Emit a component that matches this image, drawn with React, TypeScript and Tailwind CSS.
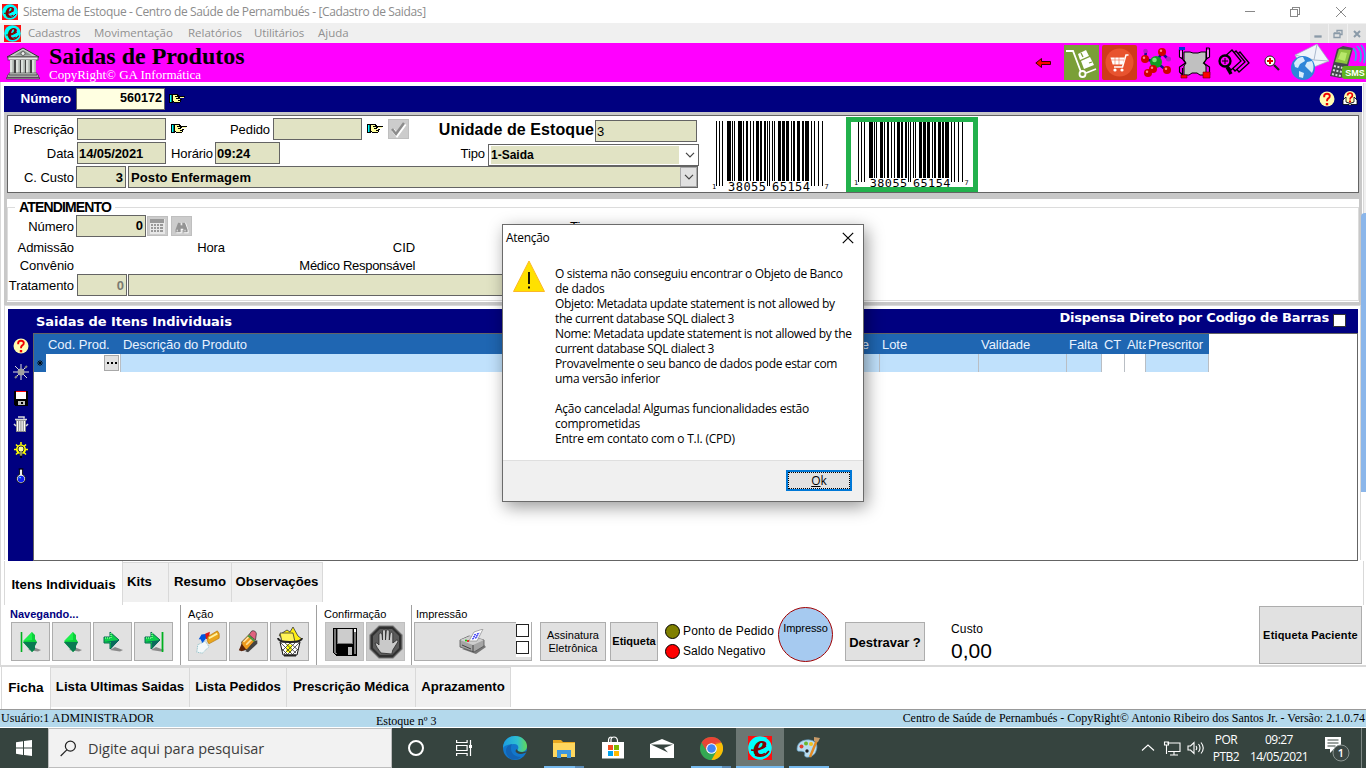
import React from "react";

const sans = "font-['Liberation_Sans',Arial,sans-serif]";
const ui = "font-['Open_Sans','Noto_Sans',sans-serif]";
const serif = "font-['Liberation_Serif','Times_New_Roman',serif]";
const verdana = "font-['DejaVu_Sans',Verdana,sans-serif]";

type P = { className?: string };

function LogoE({ className = "" }: P) {
  return (
    <svg viewBox="0 0 24 24" className={`shrink-0 overflow-visible ${className}`}>
      <rect width="24" height="24" fill="#ff1010" />
      <circle cx="12" cy="12" r="11.8" fill="#0ff" />
      <text x="12" y="19.500" textAnchor="middle" fontFamily="Liberation Serif, serif" fontWeight="bold" fontStyle="italic" fontSize="32" fill="#800000">e</text>
      <path d="M3 14q9 1 15-4M7 19q8 4 14-4" fill="none" stroke="#800000" strokeWidth="1.500" />
    </svg>
  );
}

function Bank() {
  return (
    <svg viewBox="0 0 34 34" className="h-[34px] w-[34px]">
      <path d="M1 11 17 2l16 9z" fill="#c8cdc8" stroke="#333" />
      <path d="M8 9.5 17 4l9 5.500z" fill="#8c9690" />
      <circle cx="17" cy="7.500" r="2" fill="#eee" stroke="#444" strokeWidth=".7" />
      <rect x="2" y="11" width="30" height="3" fill="#e8ebe8" stroke="#444" strokeWidth=".8" />
      <rect x="4" y="14" width="26" height="13" fill="#444" />
      {[4, 10, 15, 20, 26].map((x) => (
        <g key={x}>
          <rect x={x} y="14" width="4" height="13" fill="#dde2dd" />
          <rect x={x + 2.6} y="14" width="1" height="13" fill="#8d958f" />
        </g>
      ))}
      <path d="M3 27h28v2H3zM1.500 29h31v2h-31z" fill="#d8dcd8" stroke="#444" strokeWidth=".7" />
      <path d="M.5 31.500h33V33H.5z" fill="#99a09a" stroke="#333" strokeWidth=".6" />
    </svg>
  );
}

function Hand({ className = "" }: P) {
  return (
    <svg viewBox="0 0 16 10" className={`h-[10px] w-[16px] shrink-0 ${className}`} shapeRendering="crispEdges">
      <path d="M0 0h4v9H0z" fill="#000" />
      <path d="M1 1h1v7H1z" fill="#0ff" />
      <path d="M2 1h1v7H2z" fill="#008080" />
      <path d="M4 0h5v1h1v1h6v1h-5v1H9V3H7v1h3v1h3v1h-1v2h-1v1H5V8H4z" fill="#000" />
      <path d="M4 1h4v1H6v1h3v1h2v-1h4v1H7v1h4v1H9v1h2v1H5V7H4z" fill="#ffff9c" />
    </svg>
  );
}

function Help({ className = "" }: P) {
  return (
    <svg viewBox="0 0 16 16" className={`h-4 w-4 shrink-0 ${className}`}>
      <circle cx="8" cy="8" r="7.500" fill="#fffbb0" />
      <path d="M5.200 6.200V4.700Q5.600 2.700 8 2.700t2.800 2.100Q11 6.300 9 7.600q-1 .7-1 2.600" fill="none" stroke="#f00000" strokeWidth="1.900" />
      <rect x="6.800" y="12" width="2.400" height="2.300" fill="#f00000" />
    </svg>
  );
}

function HelpBook() {
  return (
    <svg viewBox="0 0 16 16" className="h-4 w-4 shrink-0">
      <circle cx="8" cy="6" r="6" fill="#fffbb0" />
      <path d="M1 13.500V9l3-3v5l4 1.500L12 11V6l3 3v4.500H9l-1 1-1-1z" fill="#fff" stroke="#000" strokeWidth=".8" />
      <path d="M5.500 4.500Q5.700 2 8 2t2.400 2.200Q10.500 5.500 9 6.400q-1 .7-1 2" fill="none" stroke="#f00000" strokeWidth="1.700" />
      <rect x="7" y="9.500" width="2" height="2" fill="#f00000" />
    </svg>
  );
}

function ToolIcons() {
  return (
    <div className="flex items-center">
      <svg viewBox="0 0 17 12" className="mr-[12px] h-[12px] w-[17px]">
        <path d="M.8 6 6.500 1.500V4.500H15.500v3h-9v3z" fill="#f00" stroke="#400" />
      </svg>
      <svg viewBox="0 0 35 35" className="mr-[3px] h-[35px] w-[35px]">
        <rect width="35" height="35" fill="#7a9f38" />
        <path d="M2 6h7l8 21" fill="none" stroke="#fff" strokeWidth="1.800" />
        <circle cx="18.500" cy="29" r="3" fill="none" stroke="#fff" strokeWidth="1.800" />
        <path d="m22 28 10-4" stroke="#fff" strokeWidth="1.800" />
        <path d="m14 9 8-4 3 6-9 4zM17 16l9-4 4 8-10 4z" fill="#fff" />
        <path d="m17 8 2 4M25 18l3-1" stroke="#7a9f38" strokeWidth="1.300" />
      </svg>
      <svg viewBox="0 0 35 35" className="mr-[4px] h-[35px] w-[35px]">
        <rect width="35" height="35" rx="2" fill="#cf3b1a" />
        <circle cx="17.500" cy="17.500" r="14" fill="#e8532f" />
        <path d="M26.500 10H24l-3.500 12H12" fill="none" stroke="#fff" strokeWidth="1.500" />
        <path d="M8.500 12.500h14l-1.800 7h-10z" fill="#fff" />
        <path d="M8.500 15h14M13 12v8M17 12v8" stroke="#e8532f" strokeWidth=".5" />
        <circle cx="13" cy="25" r="1.600" fill="#fff" /><circle cx="20" cy="25" r="1.600" fill="#fff" />
      </svg>
      <svg viewBox="0 0 30 30" className="mr-[7px] h-[30px] w-[30px]">
        <path d="m15 14 6-9M15 14 4 11 5 3M15 14l10 8M15 14 7 26M21 5l6 6" stroke="#10108a" strokeWidth="2.500" fill="none" />
        <circle cx="15" cy="14" r="6" fill="#129a22" /><circle cx="13.500" cy="12" r="2.300" fill="#7be57b" />
        {[[4, 11], [21, 4], [26, 22], [12, 21], [7, 25]].map(([x, y]) => (
          <g key={`${x}-${y}`}><circle cx={x} cy={y} r="4" fill="#d00000" /><circle cx={x - 1} cy={y - 1.2} r="1.200" fill="#ff8a8a" /></g>
        ))}
        <circle cx="4.500" cy="3" r="2.300" fill="#b020c0" /><circle cx="27.500" cy="11" r="2.500" fill="#b020c0" />
      </svg>
      <svg viewBox="0 0 33 32" className="mr-[7px] h-[32px] w-[33px]">
        <path d="M6 5h6l3 1h5l3-1h5v8l-2 3 2 3v9h-6l-3-2h-5l-3 2H6v-9l2-3-2-3z" fill="#c0c0c0" stroke="#000" />
        <path d="M1.500 2v8l3 2V3M4.500 12l3 4-6 4v5l3 3v-7M31.500 1v9l-3 2V1h3M28.500 12l-3 4 6 4v8" fill="none" stroke="#000" strokeWidth="1.200" />
        <path d="M3 4v6M30 3v7" stroke="#fff" />
        <path d="M1 0h6v3H1z" fill="#0033dd" /><path d="M3 28h6v3H3zM25 25h7v6h-7z" fill="#f00" stroke="#600" strokeWidth=".6" />
      </svg>
      <svg viewBox="0 0 33 30" className="mr-[13px] h-[30px] w-[33px]" fill="#ff00ff" stroke="#000" strokeWidth="1.300">
        <path d="m22 4 9 11-10 9-9-11z" />
        <path d="m18 3 9 11-10 9-9-11z" />
        <path d="m14 2 9 11-10 9-9-11z" />
        <circle cx="7" cy="13" r="5.500" strokeWidth="2.300" />
        <path d="m9 19 4 7" strokeWidth="3.500" />
        <path d="M4 13h6M7 10v6" strokeWidth="1" />
      </svg>
      <svg viewBox="0 0 16 16" className="mr-[10px] h-[16px] w-[16px]">
        <circle cx="6" cy="6" r="5" fill="#fff" stroke="#222" />
        <path d="M6 3v6M3 6h6" stroke="#e00000" strokeWidth="2" />
        <path d="m10 10 5 5" stroke="#222" strokeWidth="2.200" />
      </svg>
      <svg viewBox="0 0 39 37" className="h-[37px] w-[39px]">
        <path d="m5 11 22-11 12 17-25 10z" fill="#f0f4fa" stroke="#9aa9bd" strokeWidth=".7" />
        <path d="m5 11 19 5 3-16M24 16l15 1" fill="none" stroke="#aab8cc" />
        <circle cx="13" cy="24" r="12" fill="#2f86d8" />
        <path d="M4 19q4-7 9-6l2 4-5 3-2 4-3-1zM17 18l5-1q3 6 0 12l-4-4-3-3zM9 27l5 2-1 5-4-1z" fill="#d6ecfb" />
      </svg>
      <svg viewBox="0 0 37 37" className="h-[37px] w-[37px]">
        <path d="m8 5 6-3 10 2-8 29-5 1-10-2z" fill="#45494d" />
        <path d="m10 5 12 1-4 14-12-2z" fill="#8cc63f" /><path d="m12 8 6 1-2 8-7-2z" fill="#b8e86b" />
        <path d="m5 22 9 2M4 26l9 2M3 30l9 2" stroke="#d5d8da" strokeWidth="2" strokeDasharray="2 1.500" />
        <path d="M24 4q5 5 2 13M28 2q6 6 3 16M32 1q6 7 3 18" fill="none" stroke="#25b5e8" strokeWidth="1.600" />
        <rect x="13" y="22" width="26" height="13" rx="3" fill="#5fb320" />
        <text x="26" y="32" textAnchor="middle" fontFamily="Liberation Sans" fontWeight="bold" fontSize="9" fill="#fff">SMS</text>
      </svg>
    </div>
  );
}

const bars: [number, number][] = [
  [4, 1], [7, 1], [10, 1], [15, 4], [20, 1], [22, 1], [26, 4], [31, 1], [34, 2], [38, 1], [41, 1], [44, 3], [48, 2], [52, 2],
  [55, 1], [57, 1], [60, 1], [62, 1], [66, 3], [70, 3], [74, 3], [79, 1], [81, 2], [85, 3], [90, 2], [93, 4], [99, 1], [102, 1], [106, 1], [110, 1],
];

function Barcode({ className = "" }: P) {
  return (
    <svg viewBox="0 0 118 70" preserveAspectRatio="none" className={`shrink-0 overflow-visible ${className}`} shapeRendering="crispEdges">
      {bars.map(([x, w]) => (
        <rect key={x} x={x} y="0" width={w} height={x < 12 || x > 98 || (x > 54 && x < 58) ? 65 : 60} fill="#000" />
      ))}
      <g fontFamily="DejaVu Sans Mono, monospace" fontSize="12" fill="#000">
        <text x="16" y="69.500" textLength="38">38055</text>
        <text x="60" y="69.500" textLength="38">65154</text>
        <text x="0" y="68" fontSize="7">1</text>
        <text x="112.500" y="68" fontSize="7">7</text>
      </g>
    </svg>
  );
}

const field = "flex items-center shrink-0 h-[22px] border border-[#646464] bg-[#e1e3c4] font-bold text-[13px] leading-none";

function Lab({ className = "", children }: P & { children: React.ReactNode }) {
  return <span className={`shrink-0 pt-[1px] text-right text-[13px] tracking-[-0.080px] ${className}`}>{children}</span>;
}

function Chevron() {
  return <svg viewBox="0 0 10 6" className="h-[6px] w-[10px]"><path d="m1 .8 4 4 4-4" fill="none" stroke="#444" strokeWidth="1.200" /></svg>;
}

function MiniButton({ children, className = "" }: P & { children: React.ReactNode }) {
  return <div className={`flex h-[20px] w-[21px] shrink-0 items-center justify-center border border-[#bfbfbf] bg-[#ccc] ${className}`}>{children}</div>;
}

function Titles() {
  return (
    <>
      <div className={`flex h-[23px] items-center bg-white pl-[2px] text-[12px] text-[#8c8c8c] ${ui}`}>
        <LogoE className="h-4 w-4" />
        <span className="ml-[5px] tracking-[-0.360px]">Sistema de Estoque - Centro de Saúde de Pernambués - [Cadastro de Saidas]</span>
        <svg viewBox="0 0 110 12" className="mr-[18px] ml-auto h-[12px] w-[110px]" fill="none" stroke="#888" shapeRendering="crispEdges">
          <path d="M7 5.500h10M52.500 3.500h7v7h-7zM54.500 3V1.500h7v7h-2" />
          <path d="m98 1 10 10M108 1 98 11" shapeRendering="auto" />
        </svg>
      </div>
      <div className={`flex h-[20px] items-center bg-[#f0f0f0] pb-[1px] pl-[4px] text-[11.500px] text-[#909090] ${ui}`}>
        <LogoE className="mt-[1px] h-[17px] w-[17px]" />
        <span className="ml-[7px] w-[66px] tracking-[-0.150px]">Cadastros</span>
        <span className="w-[94px] tracking-[-0.050px]">Movimentação</span>
        <span className="w-[66px]">Relatórios</span>
        <span className="w-[64px] tracking-[-0.150px]">Utilitários</span>
        <span>Ajuda</span>
        <div className="mt-[1px] ml-auto flex gap-[1px]">
          {["M5 13h6v-1H5z", "M5 9.500h6v4H5zM5 9h6M8 8V6.500h5v4h-2", "m6 7 6 6m0-6-6 6"].map((d, i) => (
            <svg key={i} viewBox="0 0 18 19" className="h-[19px] w-[18px] bg-[#e3e3e3]" fill="none" stroke="#8a9aa8" strokeWidth={i === 2 ? 2 : 1.3}><path d={d} /></svg>
          ))}
        </div>
      </div>
      <div className="flex h-[39px] items-center bg-[#ff00ff] pl-[6px]">
        <Bank />
        <div className={`ml-[9px] flex flex-col ${serif}`}>
          <span className="text-[24px] leading-[25px] font-bold">Saidas de Produtos</span>
          <span className="-mt-[1px] text-[13px] leading-[13px] text-white">CopyRight© GA Informática</span>
        </div>
        <div className="ml-auto"><ToolIcons /></div>
      </div>
    </>
  );
}

function Header() {
  return (
    <>
      <div className="mt-[3px] flex h-[26px] items-center bg-[#000080] text-[13px] font-bold text-white">
        <span className="w-[67px] text-right text-[13.500px] tracking-[-0.100px]">Número</span>
        <div className="mr-[4px] ml-[5px] flex h-[22px] w-[89px] items-center justify-end border border-[#646464] bg-[#ffffe1] pr-[2px] pb-[2px] text-[12.600px] text-black">560172</div>
        <Hand />
        <Help className="mr-[7px] ml-auto" />
        <HelpBook />
        <span className="w-[4px]" />
      </div>
      <div className="mt-[3px] mr-[3px] ml-[3px] flex h-[78px] border border-[#646464] bg-white">
        <div className="flex w-[692px] shrink-0 pt-[2px]">
          <div className="flex flex-col gap-[2px]">
            <div className="flex h-[22px] items-center">
              <Lab className="w-[66px]">Prescrição</Lab>
              <div className={`${field} ml-[3px] w-[89px]`} />
              <Hand className="ml-[5px]" />
              <Lab className="w-[83px]">Pedido</Lab>
              <div className={`${field} ml-[3px] w-[89px]`} />
              <Hand className="ml-[5px]" />
              <MiniButton className="ml-[5px]">
                <svg viewBox="0 0 18 17" className="h-[17px] w-[18px]" fill="none"><path d="m3 9 4 5L15 3" stroke="#fff" strokeWidth="3.500" /><path d="m2 8 4 5L14 2" stroke="#8c8c8c" strokeWidth="2.500" /></svg>
              </MiniButton>
              <span className="w-[185px] pt-[1px] text-right text-[16px] font-bold tracking-[0.080px]">Unidade de Estoque</span>
              <div className={`${field} mt-[4px] ml-[1px] w-[102px] pl-[1px] !font-normal`}>3</div>
            </div>
            <div className="flex h-[22px] items-center">
              <Lab className="w-[66px]">Data</Lab>
              <div className={`${field} ml-[3px] w-[89px] pl-[1px] tracking-[-0.080px]`}>14/05/2021</div>
              <Lab className="w-[47px]">Horário</Lab>
              <div className={`${field} ml-[2px] w-[65px] pl-[1px]`}>09:24</div>
              <Lab className="w-[205px]">Tipo</Lab>
              <div className="mt-[3px] ml-[3px] flex h-[22px] w-[211px] shrink-0 items-center border border-[#646464] bg-white px-[2px]">
                <div className="mr-[6px] flex h-[18px] w-[188px] items-center bg-[#e1e3c4] text-[12px] font-bold">1-Saida</div>
                <Chevron />
              </div>
            </div>
            <div className="flex h-[22px] items-center">
              <Lab className="w-[66px]">C. Custo</Lab>
              <div className={`${field} ml-[2px] w-[50px] justify-end pr-[2px]`}>3</div>
              <div className={`${field} ml-[2px] w-[570px] justify-between pl-[2px] tracking-[0.100px]`}>
                Posto Enfermagem
                <div className="flex h-[20px] w-[17px] items-center justify-center border border-[#aaa] bg-[#e1e1e1]"><Chevron /></div>
              </div>
            </div>
          </div>
        </div>
        <Barcode className="mt-[5px] ml-[12px] h-[70px] w-[118px]" />
        <div className="mt-[1px] ml-[16px] flex h-[75px] w-[132px] items-end justify-center border-5 border-[#22b14c] bg-white">
          <Barcode className="h-[65px] w-[116px]" />
        </div>
      </div>
    </>
  );
}

function Atendimento() {
  return (
    <div className="mt-[6px] mr-[3px] ml-[3px] h-[103px] bg-white">
      <div className="flex h-[16px] items-center">
        <span className="h-px w-[8px] bg-[#dcdcdc]" />
        <span className="px-[4px] text-[14px] leading-[16px] font-bold tracking-[-0.850px]">ATENDIMENTO</span>
        <span className="h-px grow bg-[#dcdcdc]" />
      </div>
      <div className="-mt-[8px] flex h-[94px] flex-col border border-t-0 border-[#dcdcdc] pt-[8px]">
        <div className="flex h-[22px] items-center">
          <Lab className="w-[66px]">Número</Lab>
          <div className={`${field} ml-[2px] w-[70px] justify-end pr-[2px] pb-[2px]`}>0</div>
          <MiniButton className="ml-[1px]">
            <svg viewBox="0 0 17 17" className="h-[17px] w-[17px]" shapeRendering="crispEdges"><path d="M1 1h15v15H1z" fill="#e8e8e8" /><path d="M1 1h14v4H1zM2 6h2v2H2zM5 6h2v2H5zM8 6h2v2H8zM11 6h3v2h-3zM2 9h2v2H2zM5 9h2v2H5zM8 9h2v2H8zM11 9h3v2h-3zM2 12h2v2H2zM5 12h2v2H5zM8 12h2v2H8zM11 12h3v2h-3z" fill="#999" /></svg>
          </MiniButton>
          <MiniButton className="ml-[3px]">
            <svg viewBox="0 0 15 15" className="mt-[3px] h-[13px] w-[14px]"><path d="M4 2h3v3h2V2h3l3 9v3h-5v-4H7v4H1v-3z" fill="#fff" /><path d="M3 2h3v3h2V2h3l3 8v3H9V9H6v4H0v-3z" fill="#949494" /><path d="M2 10v2M11 10v2" stroke="#fff" /></svg>
          </MiniButton>
          <Lab className="ml-[378px]">Tipo</Lab>
        </div>
        <div className="mt-[1px] flex h-[18px] items-center">
          <Lab className="w-[66px]">Admissão</Lab>
          <Lab className="w-[151px]">Hora</Lab>
          <Lab className="w-[190px]">CID</Lab>
        </div>
        <div className="flex h-[18px] items-center">
          <Lab className="w-[66px]">Convênio</Lab>
          <Lab className="w-[341px] !tracking-[-0.280px]">Médico Responsável</Lab>
        </div>
        <div className="flex h-[22px] items-center">
          <Lab className="w-[66px]">Tratamento</Lab>
          <div className={`${field} ml-[3px] w-[50px] justify-end pr-[2px] text-[#7a7a70]`}>0</div>
          <div className={`${field} ml-[1px] w-[570px]`} />
        </div>
      </div>
    </div>
  );
}

const columns: [string, string, string][] = [
  ["Cod. Prod.", "w-[75px] pl-[2px]", "bg-white"],
  ["Descrição do Produto", "w-[699px] pl-[2px]", "bg-[#c0e1fc]"],
  ["Quantidade", "w-[60px] justify-end pr-[11px]", "bg-[#c0e1fc]"],
  ["Lote", "w-[99px] pl-[2px]", "bg-[#c0e1fc]"],
  ["Validade", "w-[88px] pl-[2px]", "bg-[#c0e1fc]"],
  ["Falta", "w-[35px] pl-[2px]", "bg-[#c0e1fc]"],
  ["CT", "w-[23px] pl-[2px]", "bg-white"],
  ["Alta", "w-[21px] pl-[2px]", "bg-white"],
  ["Prescritor", "w-[63px] pl-[2px]", "bg-[#c0e1fc]"],
];

function Grid() {
  return (
    <div className="mr-[4px] h-[228px] grow border border-[#646464] bg-white">
      <div className="flex h-[20px] w-[1175px] items-center bg-[#1f66b2] pt-[1px] pl-[12px] text-[13px] text-[#e8f2ff]">
        {columns.map(([n, w]) => (
          <div key={n} className={`flex shrink-0 overflow-hidden tracking-[-0.050px] ${w}`}>{n}</div>
        ))}
      </div>
      <div className="flex h-[18px] w-[1175px]">
        <div className="flex w-[12px] items-center justify-center bg-[#1f66b2]">
          <svg viewBox="0 0 7 7" className="h-[6px] w-[6px]"><path d="M3.500 0v7M0 3.500h7M1 1l5 5M6 1 1 6" stroke="#000" /></svg>
        </div>
        {columns.map(([n, w, bg]) => (
          <div key={n} className={`flex shrink-0 items-center justify-end border-r border-[#b9bec4] ${w} ${bg}`}>
            {n === "Cod. Prod." && (
              <div className="mr-[1px] flex h-[16px] w-[15px] items-center justify-center gap-[2px] border border-[#a8a8a8] bg-[#e1e1e1]">
                <i className="h-[2px] w-[2px] bg-black" /><i className="h-[2px] w-[2px] bg-black" /><i className="h-[2px] w-[2px] bg-black" />
              </div>
            )}
          </div>
        ))}
      </div>
    </div>
  );
}

function SideIcons() {
  return (
    <div className="flex w-[25px] shrink-0 flex-col items-center gap-[10px] pt-[5px]">
      <Help />
      <svg viewBox="0 0 16 16" className="h-4 w-4"><path d="M8 0v16M0 8h16M2 2l12 12M14 2 2 14" stroke="#e0e0e0" /><circle cx="8" cy="8" r="3.500" fill="#a0a0a0" /><path d="m12 4 2-2M2 14l2-2" stroke="#888" strokeWidth="2" /></svg>
      <svg viewBox="0 0 16 16" className="h-4 w-4" shapeRendering="crispEdges"><path d="M1 1h14v15H2l-1-1z" fill="#000" /><path d="M3 1h10v1H3z" fill="red" /><path d="M3 2h10v7H3z" fill="#fff" /><path d="M5 11h7v4H5z" fill="#c0c0c0" /><path d="M8 12h2v2H8z" fill="#000" /></svg>
      <svg viewBox="0 0 16 16" className="h-4 w-4"><path d="M3 4h10v12H3z" fill="#888" /><path d="M4.500 5v10M6.800 5v10M9.100 5v10M11.400 5v10" stroke="#fff" strokeWidth="1.200" /><path d="M2 3.500h12M5 1h6v1.500M1 8l2 2M15 8l-2 2" fill="none" stroke="#d8d8d8" strokeWidth="1.600" /></svg>
      <svg viewBox="0 0 16 16" className="h-4 w-4"><path d="M8 0v14M1 7.500h14M3 2.500l10 10M13 2.500l-10 10" stroke="#ff0" strokeWidth="1.500" /><circle cx="8" cy="7.500" r="5" fill="#ff0" /><circle cx="8" cy="7" r="3" fill="#ff9" stroke="#333" /><path d="M7 9v5h2V9" fill="#ff9" stroke="#333" /><path d="M7 15h2" stroke="#000" strokeWidth="2" /></svg>
      <svg viewBox="0 0 16 16" className="h-4 w-4"><path d="M5.500 1h5M6.500 1v5.500a4.500 4.500 0 1 0 3 0V1z" fill="#eee" stroke="#000" strokeWidth=".8" /><circle cx="8" cy="11" r="3.300" fill="#1020f0" /><path d="M5.700 10q1-1.500 2.300 0" stroke="#5ff" fill="none" /></svg>
    </div>
  );
}

function ItemsPanel() {
  return (
    <div className="mt-[7px] ml-[4px] flex h-[252px] w-[1350px] flex-col bg-[#000080] text-white">
      <div className={`flex h-[24px] text-[13px] font-bold ${verdana}`}>
        <span className="ml-[28px] leading-[25px] tracking-[-0.050px]">Saidas de Itens Individuais</span>
        <span className="ml-auto leading-[18px] tracking-[-0.190px]">Dispensa Direto por Codigo de Barras</span>
        <span className="mt-[5px] mr-[12px] ml-[4px] h-[13px] w-[13px] border border-[#333] bg-white" />
      </div>
      <div className="-mr-[4px] flex"><SideIcons /><Grid /></div>
    </div>
  );
}

function Tab({ children, className = "" }: P & { children: React.ReactNode }) {
  return <div className={`flex h-[40px] shrink-0 items-center justify-center border-t border-r border-[#d9d9d9] bg-[#f0f0f0] pb-[2px] text-[13.200px] font-bold ${className}`}>{children}</div>;
}

function TBtn({ children, className = "" }: P & { children: React.ReactNode }) {
  return <div className={`flex h-[39px] shrink-0 items-center justify-center border border-[#adadad] bg-[#e1e1e1] ${className}`}>{children}</div>;
}

function Arrow({ bar, right }: { bar?: boolean; right?: boolean }) {
  return (
    <svg viewBox="0 0 24 24" className="h-[24px] w-[24px]">
      <path d="m9 20 5-3 8 3-3 1.500z" fill="#8a8a8a" />
      {right ? (
        <>
          <path d="M3 7h6V2l9 8-9 9v-6H3z" fill="#0ccf4c" stroke="#066a50" />
          <path d="M3 12h7v7l8-9z" fill="#0a6a5c" />
          <path d="M4 8h6V3" stroke="#7dff8e" strokeWidth="1.500" fill="none" strokeDasharray="1 1" />
          {bar && <path d="M20.500 2v20" stroke="#00b020" strokeWidth="1.800" />}
        </>
      ) : (
        <>
          <path d="m4 12 9-10 3 3v4l2 3-2 3v4l-3 3z" fill="#0ccf3c" />
          <path d="M4 12h14l-2 4v3l-3 3z" fill="#087a50" />
          <path d="m4 11 9-9v8z" fill="#1cf04c" />
          {bar && <path d="M2.500 2v20" stroke="#00b020" strokeWidth="1.600" />}
        </>
      )}
    </svg>
  );
}

const lab11 = "block h-[17px] text-[11px] leading-[18px]";

function Toolbar() {
  return (
    <div className="flex h-[60px] w-full">
      <div className="w-[177px] shrink-0 border-r border-[#a0a0a0] pl-[6px]">
        <span className={`${lab11} font-bold text-[#000080]`}>Navegando...</span>
        <div className="ml-[1px] flex gap-[2px]">
          <TBtn className="w-[39px]"><Arrow bar /></TBtn>
          <TBtn className="w-[39px]"><Arrow /></TBtn>
          <TBtn className="w-[39px]"><Arrow right /></TBtn>
          <TBtn className="w-[39px]"><Arrow right bar /></TBtn>
        </div>
      </div>
      <div className="w-[136px] shrink-0 border-r border-[#a0a0a0] pl-[7px]">
        <span className={`${lab11} tracking-[0.100px]`}>Ação</span>
        <div className="flex gap-[2px]">
          <TBtn className="w-[39px]">
            <svg viewBox="0 0 28 28" className="h-[26px] w-[26px]"><path d="m3 17 8-4 4 6-7 7-6-1z" fill="#f4f9fa" stroke="#7ab5c0" strokeDasharray="1 1" /><path d="m4 11 3-5 6-1-1 5-4 5-2-4z" fill="#0055e0" /><path d="m11 5 5-2-1 7-3 1z" fill="#e01818" /><path d="m14 8 10-6q3 2 2 8l-11 6q-3-3-1-8z" fill="#eaa51c" stroke="#a86800" strokeWidth=".6" /><path d="m15 10 9-5" stroke="#fff2a0" strokeWidth="2" /></svg>
          </TBtn>
          <TBtn className="w-[39px]">
            <svg viewBox="0 0 26 26" className="h-[24px] w-[24px]"><path d="m9 23 10-11 3-1v4L12 24z" fill="#444" /><path d="m5 13 8-8 6 7-8 9-5 1z" fill="#ef9a1e" stroke="#222" strokeWidth=".7" /><path d="m7 13 7-7M10 16l7-7" stroke="#ffe09b" strokeWidth="1.800" /><path d="m13 5 3-4q4-1 5 3l-1 7z" fill="#e0627f" stroke="#222" strokeWidth=".7" /><path d="m12 6 7 6" stroke="#4a9a3a" strokeWidth="2" /><path d="m5 15-3 7 3 1 5-2z" fill="#5d2208" /></svg>
          </TBtn>
          <TBtn className="w-[39px]">
            <svg viewBox="0 0 28 30" className="h-[30px] w-[28px]"><path d="m3 8 8-5 3 2 3-5 5 9 4 3-8 4-10-2z" fill="#ffee10" stroke="#333" strokeWidth=".8" /><path d="M4 6h13l2 9H6z" fill="#fff458" stroke="#333" strokeWidth=".8" /><path d="m4 15 3 13h14l3-13z" fill="#fff" stroke="#111" /><path d="m11 17 5 1-1 8-5-1z" fill="#ff0" /><path d="m5 16 12 12M9 16l11 10M14 16l8 7M6 22l6 6M23 16 11 28M19 16 8 27M14 16l-8 8M23 21l-7 7" stroke="#333" strokeWidth=".8" /><path d="M2 11q0 4 12 4t12-4M8 28.500h12" fill="none" stroke="#222" strokeWidth="2" /></svg>
          </TBtn>
        </div>
      </div>
      <div className="w-[95px] shrink-0 border-r border-[#a0a0a0] pl-[7px]">
        <span className={lab11}>Confirmação</span>
        <div className="ml-[1px] flex gap-[2px]">
          <TBtn className="w-[39px] !border-[#bfbfbf] !bg-[#ccc]">
            <svg viewBox="0 0 26 28" className="h-[28px] w-[26px]" shapeRendering="crispEdges"><path d="M1 0h24v28H4l-3-3z" fill="#000" /><path d="M2 1h2v23l1 2H3l-1-1zM22 4h2v22h-2zM5 1h16v15H5z" fill="#777" /><path d="M6 1h14v14H6z" fill="#ccc" /><path d="M22 1h2v3h-2z" fill="#fff" /><path d="M7 18h12v9H7z" fill="#000" /><path d="M16 19h4v8h-4z" fill="#bbb" /></svg>
          </TBtn>
          <TBtn className="w-[39px] !border-[#bfbfbf] !bg-[#ccc]">
            <svg viewBox="0 0 34 34" className="h-[34px] w-[34px]"><path d="M10 1h14l9 9v14l-9 9H10l-9-9V10z" fill="#303030" stroke="#777" strokeWidth="1.200" /><path d="M11 4h12l7 7v12l-7 7H11l-7-7V11z" fill="#5c5c5c" /><path d="M12 28c-3-4-5-7-6-10q2-1 4 2V9q1.500-2 3 0l.5 6V5.500q1.500-2 3 0V15l.8-9.500q1.500-1.500 3 0V15l1-7q1.500-1.500 2.500 0v10l4-3q2 0 1 2l-5 8-1 4z" fill="#c9c9c9" stroke="#2b2b2b" strokeWidth=".8" /></svg>
          </TBtn>
        </div>
      </div>
      <div className="w-[128px] shrink-0 pl-[2px]">
        <span className={`${lab11} pl-[2px]`}>Impressão</span>
        <TBtn className="w-[118px] !justify-start">
          <svg viewBox="0 0 28 26" className="ml-[44px] h-[26px] w-[28px]"><path d="m3 20 14 5 10-7-2-2z" fill="#777" /><path d="m1 11 9-4 15 4v6l-10 6L1 18z" fill="#a5a5a5" stroke="#555" strokeWidth=".8" /><path d="m1 11 13 5 11-5-14-4z" fill="#cfcfcf" /><path d="M14 16v7M3 16l9 4" stroke="#444" /><path d="m10 12 5-9 9-3-6 12z" fill="#fff" stroke="#888" strokeWidth=".7" /><path d="m15 6 6-2M14 8l6-2M13 10l6-2" stroke="#3a3af0" strokeWidth="1.300" strokeDasharray="2 1" /><circle cx="9" cy="12" r="1" fill="#e00" /><circle cx="7" cy="11.500" r="1" fill="#0c0" /></svg>
          <div className="-mt-[1px] ml-auto flex h-[35px] w-[15px] shrink-0 flex-col gap-[4px] self-start bg-white pt-[2px]">
            <i className="h-[13px] w-[13px] border border-[#222] bg-white" />
            <i className="h-[13px] w-[13px] border border-[#222] bg-white" />
          </div>
        </TBtn>
      </div>
      <TBtn className="mt-[17px] w-[66px] text-center text-[11px] leading-[13px]"><span>Assinatura<br />Eletrônica</span></TBtn>
      <TBtn className="mt-[17px] ml-[4px] w-[48px] text-[11px] font-bold">Etiqueta</TBtn>
      <div className="mt-[16px] ml-[7px] flex w-[112px] shrink-0 flex-col text-[12px]">
        <div className="flex h-[20px] items-center gap-[3px] tracking-[0.150px]"><i className="h-[15px] w-[15px] shrink-0 rounded-full border border-black bg-[#808000]" />Ponto de Pedido</div>
        <div className="flex h-[20px] items-center gap-[3px] tracking-[0.080px]"><i className="h-[15px] w-[15px] shrink-0 rounded-full border border-black bg-[#ff0000]" />Saldo Negativo</div>
      </div>
      <div className="mt-[2px] ml-[1px] flex h-[55px] w-[55px] shrink-0 justify-center rounded-full border border-[#a00000] bg-[#a6caf0] pt-[12px] text-[11px] leading-[16px] tracking-[-0.100px]">Impresso</div>
      <TBtn className="mt-[17px] ml-[12px] w-[80px] pt-[2px] text-[13px] font-bold">Destravar ?</TBtn>
      <div className="mt-[16px] ml-[26px] flex flex-col">
        <span className="text-[12px] leading-[16px] tracking-[0.150px]">Custo</span>
        <span className="text-[21px] leading-[28px]">0,00</span>
      </div>
      <TBtn className="mt-[1px] mr-[4px] ml-auto !h-[58px] w-[103px] text-[11px] font-bold tracking-[0.180px]">Etiqueta Paciente</TBtn>
    </div>
  );
}

const tb = "flex h-[40px] w-[48px] shrink-0 items-center justify-center";

function Taskbar() {
  return (
    <div className={`flex h-[40px] bg-[#36443f] text-white ${ui}`}>
      <div className={tb}>
        <svg viewBox="0 0 16 16" className="h-[16px] w-[16px]" fill="#fff"><path d="M0 2.300 7 1.200v6.400H0zM8 1.100 16 0v7.600H8zM0 8.500h7v6.400L0 13.800zM8 8.500h8V16l-8-1.100z" /></svg>
      </div>
      <div className="flex w-[344px] shrink-0 items-center border border-[#bdbdbd] bg-[#f2f2f2] text-[#3c3c3c]">
        <svg viewBox="0 0 18 18" className="ml-[11px] h-[17px] w-[17px]" fill="none" stroke="#222" strokeWidth="1.300"><circle cx="11" cy="6.500" r="5.300" /><path d="m7.200 10.500-6.500 6.500" /></svg>
        <span className="ml-[11px] pt-[1px] text-[14.500px] tracking-[-0.030px]">Digite aqui para pesquisar</span>
      </div>
      <div className={tb}><i className="h-[16px] w-[16px] rounded-full border-2 border-white" /></div>
      <div className={tb}><svg viewBox="0 0 16 16" className="h-[16px] w-[16px]" fill="none" stroke="#fff" strokeWidth="1.200"><path d="M.6 0v2.500h10.500V0M.6 16v-2.500h10.500V16M.6 5.500h10.500v5H.6zM14.500 0v16" /><path d="M13 6.500h3" strokeWidth="3" /></svg></div>
      <div className={`${tb} ml-[3px]`}>
        <svg viewBox="0 0 24 24" className="h-[24px] w-[24px]"><defs><linearGradient id="ed" x1="0" x2="1"><stop offset="0" stopColor="#1b9de2" /><stop offset=".6" stopColor="#2fbfd0" /><stop offset="1" stopColor="#62d957" /></linearGradient></defs><circle cx="12" cy="12" r="12" fill="#1277cc" /><path d="M0 12C0 5 5 0 12 0s12 5 12 10c0 4-3 6-6 6-4 0-4-2-3-3 1-2 0-5-4-5C5 8 1 10 0 12z" fill="url(#ed)" /><path d="M8 13c0 5 5 8 10 8-8 6-15 0-15-6 0-4 3-6 6-7-1 1-1 3-1 5z" fill="#1263b4" /><path d="M25 15c-3 3-8 4-11 2q-3-2 0-4c0 3 5 4 11 2z" fill="#36443f" /></svg>
      </div>
      <div className={`${tb} relative ml-[1px]`}>
        <svg viewBox="0 0 22 19" className="h-[19px] w-[22px]"><path d="M0 1h8l2 2h12v15H0z" fill="#e9a820" /><path d="M0 4h22v14H0z" fill="#ffd75e" /><path d="M4 19v-8h14v8h-4v-4H8v4z" fill="#3f97dd" /></svg>
        <i className="absolute bottom-0 left-[4px] h-[2px] w-[31px] bg-[#76b9ed]" /><i className="absolute bottom-0 left-[35px] h-[2px] w-[9px] bg-[#5a8ab5]" />
      </div>
      <div className={`${tb} ml-[1px]`}><svg viewBox="0 0 24 24" className="h-[24px] w-[24px]"><path d="M7.500 7V4.500q0-3.500 3-3.500M10 7V4q0-3 3-3t3.500 3.500V7" fill="none" stroke="#fff" strokeWidth="1.200" /><path d="M1 6h22v16.500H1z" fill="#fff" /><path d="M7 9h5v5H7z" fill="#f25022" /><path d="M13 9h5v5h-5z" fill="#7fba00" /><path d="M7 15h5v5H7z" fill="#00a4ef" /><path d="M13 15h5v5h-5z" fill="#ffb900" /></svg></div>
      <div className={`${tb} ml-[1px]`}><svg viewBox="0 0 24 19" className="h-[19px] w-[24px]"><path d="M0 5 12 0l12 5v14H0z" fill="#fff" /><path d="m1 5.500 17 8-4-4.500 9-3.500z" fill="#36443f" /></svg></div>
      <div className={`${tb} relative ml-[1px]`}>
        <svg viewBox="0 0 24 24" className="h-[23px] w-[23px]"><circle cx="12" cy="12" r="12" fill="#34a853" /><path d="M12 12 1.600 6A12 12 0 0 1 22.400 6z" fill="#ea4335" /><path d="M1.600 6 8 16l4-4z" fill="#ea4335" /><path d="M22.400 6A12 12 0 0 1 12 24l5-9-1-9z" fill="#fbbc05" /><path d="M12 6h10.400L12 8z" fill="#ea4335" /><circle cx="12" cy="12" r="5.600" fill="#fff" /><circle cx="12" cy="12" r="4.500" fill="#4285f4" /></svg>
        <i className="absolute bottom-0 left-[4px] h-[2px] w-[31px] bg-[#76b9ed]" /><i className="absolute bottom-0 left-[35px] h-[2px] w-[9px] bg-[#5a8ab5]" />
      </div>
      <div className={`${tb} ml-[1px] border-b-2 border-[#76b9ed] bg-[#6c7773] pt-[2px]`}><LogoE className="h-[24px] w-[24px]" /></div>
      <div className={`${tb} relative`}>
        <svg viewBox="0 0 24 24" className="h-[24px] w-[24px]"><path d="M1 13C1 6 8 3 14 4c7 1 8 6 6 11-1 4-6 7-10 6-3-1 0-4-2-5-3-2-7 1-7-3z" fill="#b8dcf0" stroke="#5c98bd" strokeWidth=".7" /><circle cx="5.500" cy="10.500" r="2" fill="#e04030" /><circle cx="10" cy="7.500" r="2" fill="#6ab82e" /><circle cx="15" cy="8" r="2" fill="#f0c020" /><circle cx="11" cy="15" r="1.700" fill="#222" /><path d="m21 4-7 17" stroke="#e28a24" strokeWidth="2.400" /><path d="m18 1 6 1-2 4-4-1z" fill="#c79a68" /></svg>
        <i className="absolute bottom-0 left-[5px] h-[2px] w-[40px] bg-[#76b9ed]" />
      </div>
      <div className="ml-auto flex items-center">
        <svg viewBox="0 0 64 18" className="mr-[1px] h-[18px] w-[64px]" fill="none" stroke="#fff" strokeWidth="1.100"><path d="m1 11.500 6-5.500 6 5.500M26 4h13v8.500H27M33 12.500V16M29 16h8" /><path d="M23.500 3h4v3h-4zM25.500 6v9" /><path d="M47 7h2.500L53 3.500v11L49.500 11H47zM55 7q1.500 2 0 4M57.500 5q3 4 0 8M60 3.500q4.500 5.500 0 11" /></svg>
        <div className="ml-[5px] flex w-[30px] flex-col text-center text-[12px] leading-[17px] tracking-[-0.500px]"><span>POR</span><span>PTB2</span></div>
        <div className="ml-[7px] flex w-[62px] flex-col items-center text-[12px] leading-[17px] tracking-[-0.550px]"><span>09:27</span><span>14/05/2021</span></div>
        <svg viewBox="0 0 26 26" className="mt-[2px] ml-[14px] h-[26px] w-[26px]"><path d="M1 1h16v12h-7l-4 4v-4H1z" fill="#fff" /><path d="M3.500 4h11M3.500 7h11M3.500 10h8" stroke="#36443f" /><circle cx="17" cy="17" r="8" fill="#3b4744" stroke="#8b9592" /><text x="17" y="21" textAnchor="middle" fontSize="11" fontFamily="Open Sans" fontWeight="600" fill="#fff">1</text></svg>
        <i className="ml-[11px] h-[40px] w-px bg-[#7d8784]" /><i className="w-[4px]" />
      </div>
    </div>
  );
}

const message: [string, string][] = [
  ["O sistema não conseguiu encontrar o Objeto de Banco", "tracking-[-0.340px]"],
  ["de dados", "tracking-[-0.260px]"],
  ["Objeto: Metadata update statement is not allowed by", "tracking-[-0.350px]"],
  ["the current database SQL dialect 3", "tracking-[-0.400px]"],
  ["Nome: Metadata update statement is not allowed by the", "tracking-[-0.350px]"],
  ["current database SQL dialect 3", "tracking-[-0.400px]"],
  ["Provavelmente o seu banco de dados pode estar com", "tracking-[-0.360px]"],
  ["uma versão inferior", "tracking-[-0.260px]"],
  ["", ""],
  ["Ação cancelada! Algumas funcionalidades estão", "tracking-[-0.270px]"],
  ["comprometidas", "tracking-[-0.260px]"],
  ["Entre em contato com o T.I. (CPD)", "tracking-[-0.230px]"],
];

function Dialog() {
  return (
    <div className={`absolute top-[224px] left-[502px] flex h-[278px] w-[362px] flex-col border border-[#6b6b6b] bg-white text-[12px] text-black shadow-[3px_5px_16px_rgba(0,0,0,0.4)] ${ui}`}>
      <div className="flex h-[25px] items-center justify-between pr-[9px] pl-[3px]">
        <span className="tracking-[-0.300px]">Atenção</span>
        <svg viewBox="0 0 12 12" className="h-[12px] w-[12px]"><path d="m.8.8 10.400 10.400M11.200.8.8 11.200" stroke="#000" strokeWidth="1.200" /></svg>
      </div>
      <div className="flex grow pt-[10px] pl-[10px]">
        <svg viewBox="0 0 32 32" className="h-[32px] w-[32px] shrink-0"><path d="M16 1 31.500 31.500H.5z" fill="#ffe100" stroke="#fcb827" /><path d="M16 12v12" stroke="#000" strokeWidth="1.800" /><path d="M16 26.500v2" stroke="#000" strokeWidth="2" /></svg>
        <div className="mt-[6px] ml-[10px]">
          {message.map(([l, t], i) => <div key={i} className={`h-[15px] leading-[15px] ${t}`}>{l}</div>)}
        </div>
      </div>
      <div className="flex h-[41px] shrink-0 items-start justify-end border-t border-[#dfdfdf] bg-[#f0f0f0] pt-[9px] pr-[11px]">
        <div className="flex h-[21px] w-[66px] border-2 border-[#0078d7] bg-[#e1e1e1]">
          <div className="flex grow items-center justify-center border border-dotted border-black"><span><u>O</u>k</span></div>
        </div>
      </div>
    </div>
  );
}

export default function App() {
  return (
    <div className={`relative flex h-[768px] w-[1366px] flex-col overflow-hidden bg-white whitespace-nowrap text-black ${sans}`}>
      <Titles />
      <div className="flex h-[583px] shrink-0 flex-col border-l border-[#d9d9d9] pl-[3px]">
        <div className="mt-[1px] flex h-[222px] shrink-0">
          <div className="flex h-[222px] w-[1358px] flex-col bg-[#c8c8c8] [box-shadow:inset_0_3px_#fff]"><Header /><Atendimento /></div>
          <span className="ml-[1px] grow border-l border-[#d9d9d9] bg-[#f0f0f0]" />
        </div>
        <div className="flex h-[255px] shrink-0">
          <div className="h-[255px] w-[1357px] shrink-0 border border-b-0 border-[#d9d9d9] bg-white">
            <div className="-mt-[4px] -ml-[1px]"><ItemsPanel /></div>
          </div>
        </div>
        <div className="mt-[1px] flex h-[44px] shrink-0 items-start border-l border-[#d9d9d9]">
          <div className="flex h-[44px] w-[118px] items-center justify-center border-r border-[#d9d9d9] pt-[3px] text-[13.300px] font-bold">Itens Individuais</div>
          <Tab className="mt-[1px] w-[46px] !justify-start pl-[4px]">Kits</Tab>
          <Tab className="mt-[1px] w-[63px]">Resumo</Tab>
          <Tab className="mt-[1px] w-[91px]">Observações</Tab>
          <span className="mr-[2px] ml-auto h-[44px] w-px bg-[#d9d9d9]" />
        </div>
        <Toolbar />
      </div>
      <div className="flex h-[44px] shrink-0 items-start border-t-2 border-[#d9d9d9] pl-[1px]">
        <div className="flex h-[42px] w-[50px] items-center justify-center border-x border-[#d9d9d9] text-[13.500px] font-bold">Ficha</div>
        <Tab className="w-[139px]">Lista Ultimas Saidas</Tab>
        <Tab className="w-[97px]">Lista Pedidos</Tab>
        <Tab className="w-[129px]">Prescrição Médica</Tab>
        <Tab className="w-[95px]">Aprazamento</Tab>
      </div>
      <div className={`mb-px flex h-[18px] shrink-0 justify-between border-t border-[#999] bg-[#b4d9ec] text-[12px] leading-[16px] ${serif}`}>
        <span className="w-[375px] pl-[1px] tracking-[0.120px]">Usuário:1 ADMINISTRADOR</span>
        <span className="pt-[3px] pl-[1px]">Estoque nº 3</span>
        <span className="ml-auto pr-[1px] tracking-[-0.020px]">Centro de Saúde de Pernambués - CopyRight© Antonio Ribeiro dos Santos Jr. - Versão: 2.1.0.74</span>
      </div>
      <Taskbar />
      <div className="absolute top-[213px] right-0 h-[279px] w-[5px] rounded-tl-[4px] bg-[#8bb6ea]" />
      <Dialog />
    </div>
  );
}
